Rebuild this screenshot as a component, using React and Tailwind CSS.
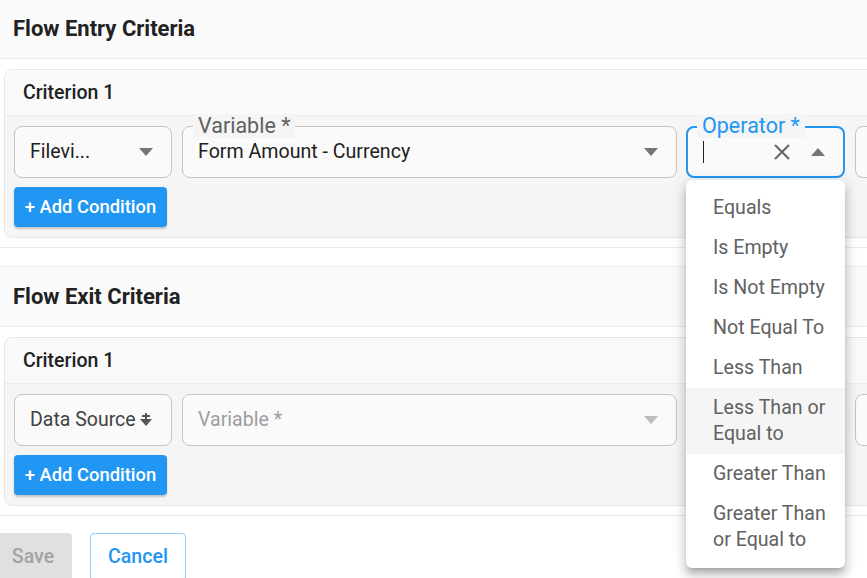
import React from "react";

const font = { fontFamily: "Roboto, 'Noto Sans', sans-serif" };

function Caret({ up = false, color = "#757575" }) {
  return (
    <svg width="14" height="8" viewBox="0 0 14 8" className="shrink-0">
      {up ? (
        <path d="M0 8 L7 0 L14 8 Z" fill={color} />
      ) : (
        <path d="M0 0 L14 0 L7 8 Z" fill={color} />
      )}
    </svg>
  );
}

function SortIcon() {
  return (
    <svg width="14" height="14" viewBox="0 0 14 14" className="shrink-0">
      <path d="M7 0 V7" stroke="#555" strokeWidth="2" />
      <path d="M3 3 H11" stroke="#555" strokeWidth="2" />
      <path d="M1 6 L13 6 L7 13 Z" fill="#555" />
    </svg>
  );
}

function CriterionCard({ entry }) {
  return (
    <div className="ml-[4px] w-[1100px] rounded-[8px] border border-[#e6e6e6] overflow-hidden">
      <div className="h-[46px] bg-[#fafafa] border-b border-[#ebebeb] flex items-center pl-[18px] text-[19.5px] font-medium text-[#212121]">
        Criterion 1
      </div>
      <div className="bg-[#f5f5f5] px-[9px] pt-[10px] pb-[10px]">
        <div className="flex items-center h-[52px]">
          {/* First select */}
          <div className="w-[158px] h-[52px] rounded-[8px] border border-[#c4c4c4] bg-[#fafafa] flex items-center pl-[15px] pr-[18px] justify-between">
            {entry ? (
              <>
                <span className="text-[19.5px] text-[#212121]">Filevi...</span>
                <Caret />
              </>
            ) : (
              <>
                <span className="text-[19.5px] text-[#424242] whitespace-nowrap">Data Source</span>
                <span className="-ml-[16px]"><SortIcon /></span>
              </>
            )}
          </div>
          {/* Variable field */}
          <div className="ml-[10px] w-[495px] h-[52px] relative rounded-[8px] border border-[#c4c4c4] bg-[#fafafa] flex items-center pl-[15px] pr-[18px] justify-between">
            {entry ? (
              <>
                <span className="absolute left-[10px] -top-[13px] px-[5px] bg-[#f5f5f5] text-[21.5px] leading-[24px] text-[#616161]">
                  Variable *
                </span>
                <span className="text-[19.6px] text-[#212121]">Form Amount - Currency</span>
                <Caret />
              </>
            ) : (
              <>
                <span className="text-[19.6px] text-[#9e9e9e]">Variable *</span>
                <Caret color="#bdbdbd" />
              </>
            )}
          </div>
          {/* Operator */}
          {entry ? (
            <div className="ml-[9px] w-[159px] h-[52px] relative rounded-[8px] border-2 border-[#2196f3] bg-[#fafafa] flex items-center pl-[15px] pr-[18px]">
              <span className="absolute left-[9px] -top-[14px] px-[5px] bg-[#f5f5f5] text-[21.5px] leading-[24px] text-[#2196f3] whitespace-nowrap">
                Operator *
              </span>
              <span className="w-[1px] h-[22px] bg-[#212121]" />
              <span className="ml-auto mr-[20px]">
                <svg width="18" height="18" viewBox="0 0 18 18">
                  <path d="M2 2 L16 16 M16 2 L2 16" stroke="#666" strokeWidth="2" />
                </svg>
              </span>
              <Caret up />
            </div>
          ) : (
            <div className="ml-[9px] w-[159px] h-[52px] rounded-[8px] border border-[#c4c4c4] bg-[#fafafa]" />
          )}
          <div className="ml-[10px] w-[200px] h-[52px] rounded-[8px] border border-[#c4c4c4] bg-[#fafafa]" />
        </div>
        <button className="mt-[9px] h-[40px] w-[153px] rounded-[4px] bg-[#2196f3] text-white text-[18.4px] font-medium flex items-center justify-center shadow-[0_2px_2px_rgba(0,0,0,0.2)] whitespace-nowrap">
          + Add Condition
        </button>
      </div>
    </div>
  );
}

function Section({ title, entry }) {
  return (
    <div className="border-y border-[#ececec] bg-white">
      <div className="h-[60px] bg-[#fafafa] border-b border-[#e8e8e8] flex items-center pl-[13px] text-[22px] font-bold text-[#212121]">
        {title}
      </div>
      <div className="pt-[10px] pb-[9px]">
        <CriterionCard entry={entry} />
      </div>
    </div>
  );
}

const items = [
  "Equals",
  "Is Empty",
  "Is Not Empty",
  "Not Equal To",
  "Less Than",
  "Less Than or Equal to",
  "Greater Than",
  "Greater Than or Equal to",
];

export default function App() {
  return (
    <div style={font} className="w-[867px] h-[578px] overflow-hidden relative bg-white">
      <div className="-mt-[2px]">
        <Section title="Flow Entry Criteria" entry />
        <div className="h-[18px]" />
        <Section title="Flow Exit Criteria" entry={false} />
        <div className="flex items-start pt-[17px]">
          <button className="-ml-[6px] h-[48px] w-[78px] rounded-[4px] bg-[#e0e0e0] text-[#a3a3a3] text-[19.6px] font-medium">
            Save
          </button>
          <button className="ml-[18px] h-[48px] w-[96px] rounded-[4px] border border-[#90caf9] text-[#2196f3] text-[19.6px] font-medium">
            Cancel
          </button>
        </div>
      </div>

      <div className="absolute left-[686px] top-[180px] w-[159px] bg-white rounded-[6px] py-[8px] shadow-[0_5px_5px_-3px_rgba(0,0,0,0.2),0_8px_10px_1px_rgba(0,0,0,0.14),0_3px_14px_2px_rgba(0,0,0,0.12)]">
        {items.map((it, i) => (
          <div
            key={it}
            className={`pl-[27px] pr-[8px] py-[7px] text-[19.6px] leading-[26px] text-[#616161] ${i === 5 ? "bg-[#f5f5f5]" : ""}`}
          >
            {it}
          </div>
        ))}
      </div>
    </div>
  );
}
